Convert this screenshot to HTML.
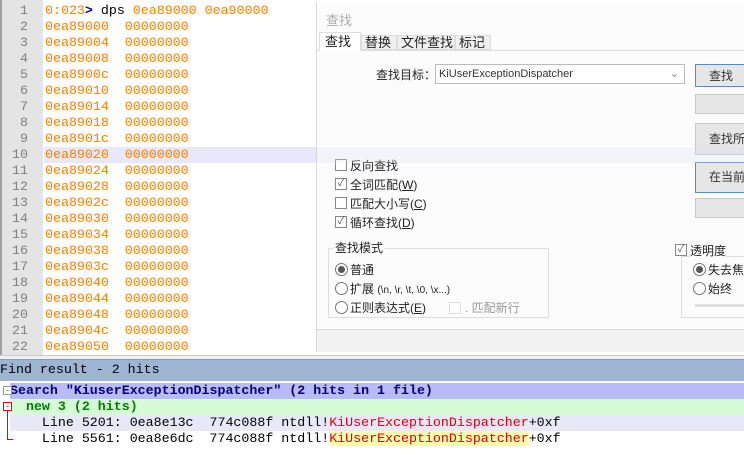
<!DOCTYPE html>
<html><head><meta charset="utf-8"><style>
*{margin:0;padding:0;box-sizing:border-box}
body{width:744px;height:455px;overflow:hidden;background:#fff;position:relative;font-family:"Liberation Sans","Noto Sans CJK SC",sans-serif}
.mono{font-family:"Liberation Mono",monospace;font-size:13.3px}
#gut{position:absolute;left:0;top:0;width:43px;height:355px;background:#e4e4e4;border-left:2px solid #a0a0a0}
.n{position:absolute;width:28px;text-align:right;color:#808080;height:16px;line-height:16px}
.t{position:absolute;left:45px;color:#ff8000;height:16px;line-height:16px;white-space:pre}
#hl{position:absolute;left:44px;top:147px;width:700px;height:16px;background:#e8e8fa}
#dlg{position:absolute;left:316px;top:2px;width:428px;height:350px;background:rgba(252,252,252,0.96);border-left:1px solid #d8d8d8}
.z{position:absolute;font-size:12px;color:#222;white-space:nowrap}
.cb{position:absolute;width:12px;height:12px;border:1px solid #888;background:#fff;font-size:10px;line-height:10px;text-align:center;color:#555}
.rb{position:absolute;width:13px;height:13px;border:1px solid #777;border-radius:50%;background:#fff}
.btn{position:absolute;left:378px;width:60px;background:#e6e6e6;border:1px solid #c8c8c8;font-size:12px;color:#333;padding-left:13px;line-height:22px}
#bar{position:absolute;left:0;top:359px;width:744px;height:22px;background:#9db5d2;border-top:1px solid #7f9cc0;line-height:20px;font-size:13.3px;color:#000}
.rr{position:absolute;left:10px;width:734px;height:16px;line-height:16px;white-space:pre;font-size:13.3px}
</style></head><body>
<div id="gut"></div>
<div id="hl"></div>
<div class="mono" id="ed"></div>
<script>
var t=["0:023","0ea89000","0ea89004","0ea89008","0ea8900c","0ea89010","0ea89014","0ea89018","0ea8901c","0ea89020","0ea89024","0ea89028","0ea8902c","0ea89030","0ea89034","0ea89038","0ea8903c","0ea89040","0ea89044","0ea89048","0ea8904c","0ea89050"];
var h="";for(var i=0;i<22;i++){var y=3+i*16;h+='<div class="n" style="top:'+y+'px">'+(i+1)+'</div>';
if(i==0)h+='<div class="t" style="top:'+y+'px">0:023<b style="color:#000080">&gt;</b><span style="color:#000"> dps</span> 0ea89000 0ea90000</div>';
else h+='<div class="t" style="top:'+y+'px">'+t[i]+'  00000000</div>';}
document.getElementById("ed").innerHTML=h;
</script>
<div id="dlg">
<div class="z" style="left:9px;top:8px;color:#aaa;font-size:13px">查找</div>
<div style="position:absolute;left:0;top:48px;width:428px;border-top:1px solid #ddd"></div>
<div class="z" style="left:2px;top:30px;width:42px;height:19px;background:#fff;border:1px solid #ddd;border-bottom:none;padding-left:5px;line-height:18px;font-size:13px">查找</div>
<div class="z" style="left:44px;top:33px;width:36px;height:15px;background:#f0f0f0;border:1px solid #ddd;padding-left:3px;line-height:14px;font-size:13px">替换</div>
<div class="z" style="left:80px;top:33px;width:58px;height:15px;background:#f0f0f0;border:1px solid #ddd;padding-left:3px;line-height:14px;font-size:13px">文件查找</div>
<div class="z" style="left:138px;top:33px;width:36px;height:15px;background:#f0f0f0;border:1px solid #ddd;padding-left:3px;line-height:14px;font-size:13px">标记</div>
<div class="z" style="left:59px;top:64px">查找目标：</div>
<div style="position:absolute;left:118px;top:62px;width:250px;height:20px;border:1px solid #bbb;background:#fff;font-size:11px;line-height:18px;padding-left:3px;color:#333">KiUserExceptionDispatcher<span style="position:absolute;right:5px;color:#888">⌄</span></div>
<div class="btn" style="top:62px;height:23px;border-color:#4a90d9">查找</div>
<div class="btn" style="top:92px;height:20px"></div>
<div class="btn" style="top:121px;height:32px;line-height:30px">查找所</div>
<div class="btn" style="top:160px;height:31px;line-height:29px;border-color:#4a90d9">在当前</div>
<div class="btn" style="top:196px;height:20px"></div>
<div class="cb" style="left:18px;top:157px"></div><div class="z" style="left:33px;top:155px">反向查找</div>
<div class="cb" style="left:18px;top:176px">✓</div><div class="z" style="left:33px;top:174px">全词匹配(<u>W</u>)</div>
<div class="cb" style="left:18px;top:195px"></div><div class="z" style="left:33px;top:193px">匹配大小写(<u>C</u>)</div>
<div class="cb" style="left:18px;top:214px">✓</div><div class="z" style="left:33px;top:212px">循环查找(<u>D</u>)</div>
<div style="position:absolute;left:11px;top:246px;width:221px;height:70px;border:1px solid #ddd"></div>
<div class="z" style="left:16px;top:237px;background:#fcfcfc;padding:0 2px">查找模式</div>
<div class="rb" style="left:18px;top:261px"><div style="margin:2px;width:7px;height:7px;border-radius:50%;background:#555"></div></div><div class="z" style="left:33px;top:259px">普通</div>
<div class="rb" style="left:18px;top:280px"></div><div class="z" style="left:33px;top:278px">扩展 <span style="font-size:10px">(\n, \r, \t, \0, \x...)</span></div>
<div class="rb" style="left:18px;top:299px"></div><div class="z" style="left:33px;top:297px">正则表达式(<u>E</u>)</div>
<div class="cb" style="left:132px;top:300px;border-color:#ddd"></div><div class="z" style="left:148px;top:297px;color:#999">. 匹配新行</div>
<div style="position:absolute;left:364px;top:254px;width:70px;height:62px;border:1px solid #ddd"></div>
<div class="cb" style="left:358px;top:242px">✓</div><div class="z" style="left:373px;top:240px;background:#fcfcfc">透明度</div>
<div class="rb" style="left:376px;top:261px"><div style="margin:2px;width:7px;height:7px;border-radius:50%;background:#555"></div></div><div class="z" style="left:391px;top:259px">失去焦</div>
<div class="rb" style="left:376px;top:280px"></div><div class="z" style="left:391px;top:278px">始终</div>
<div style="position:absolute;left:378px;top:302px;width:60px;height:3px;background:#e0e0e0"></div>
<div style="position:absolute;left:0;top:327px;width:428px;height:23px;border-top:1px solid #ddd;background:#f2f2f2"></div>
<div style="position:absolute;left:-1px;top:145px;width:429px;height:16px;background:rgba(220,220,245,0.25)"></div>
</div>
<div style="position:absolute;left:0;top:355px;width:744px;height:4px;background:#f0f0f0;border-top:1px solid #ccc"></div>
<div id="bar" class="mono">Find result - 2 hits</div>
<div class="mono">
<div class="rr" style="top:383px;background:#babaf8;color:#000080;font-weight:bold">Search "KiuserExceptionDispatcher" (2 hits in 1 file)</div>
<div class="rr" style="top:399px;background:#d5fcd5;color:#008000;font-weight:bold">  new 3 (2 hits)</div>
<div class="rr" style="top:415px;background:#e8e8fa;color:#000">    Line 5201: 0ea8e13c  774c088f ntdll!<span style="color:#e00000">KiUserExceptionDispatcher</span>+0xf</div>
<div class="rr" style="top:431px;color:#000">    Line 5561: 0ea8e6dc  774c088f ntdll!<span style="color:#e00000;background:#ffffb0">KiUserExceptionDispatcher</span>+0xf</div>
</div>
<div style="position:absolute;left:3px;top:386px;width:9px;height:9px;border:1px solid #999;background:#fff;font-size:9px;line-height:7px;text-align:center;color:#555">-</div>
<div style="position:absolute;left:3px;top:402px;width:9px;height:9px;border:1px solid #e00;background:#fff;font-size:9px;line-height:7px;text-align:center;color:#e00">-</div>
<div style="position:absolute;left:7px;top:411px;width:1px;height:29px;background:#e00"></div>
<div style="position:absolute;left:7px;top:439px;width:6px;height:1px;background:#e00"></div>
</body></html>
